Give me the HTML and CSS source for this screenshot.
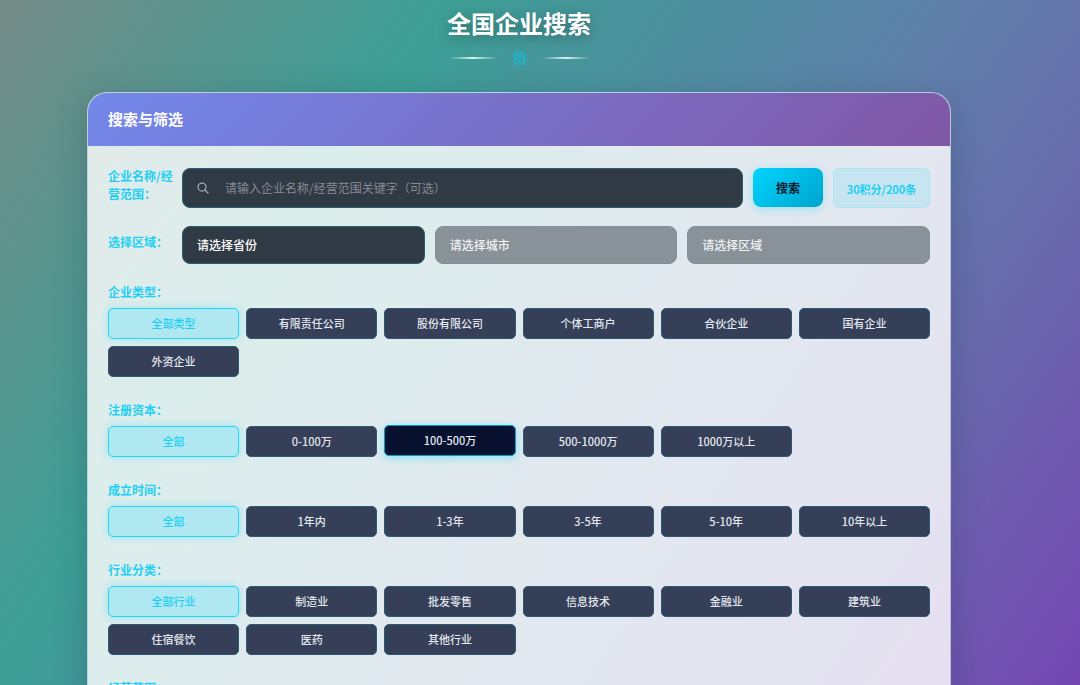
FILE: index.html
```html
<!DOCTYPE html>
<html lang="zh-CN">
<head>
<meta charset="utf-8">
<meta name="viewport" content="width=device-width, initial-scale=1">
<title>全国企业搜索</title>
<link rel="stylesheet" href="styles.css">
</head>
<body>
<main class="page">
  <header class="page-header">
    <h1 class="page-title">全国企业搜索</h1>
    <div class="divider">
      <span class="divider-line"></span>
      <svg class="divider-icon" viewBox="0 0 24 24" fill="none" stroke="currentColor" stroke-width="2" stroke-linejoin="round" stroke-linecap="round" aria-hidden="true"><path d="M4.500 2h15L22 8v2.500c-1 2-4 2-5 0c-1 2-4 2-5 0c-1 2-4 2-5 0c-1 2-4 2-5 0V8zM2.500 7.500h19M3 12.500V20c0 1.200.8 2 2 2h14c1.200 0 2-.8 2-2v-7.500M8 17.500h8"/></svg>
      <span class="divider-line"></span>
    </div>
  </header>

  <section class="card">
    <h2 class="card-header">搜索与筛选</h2>
    <form class="card-body">
      <div class="field-row search-row">
        <label class="label" for="keyword">企业名称/经营范围：</label>
        <div class="search-controls">
          <div class="search-box">
            <svg class="search-icon" viewBox="0 0 24 24" fill="none" stroke="currentColor" stroke-width="2.500" stroke-linecap="round" aria-hidden="true"><circle cx="10" cy="10" r="8"/><path d="M16 16l6 6"/></svg>
            <input class="search-input" id="keyword" type="text" placeholder="请输入企业名称/经营范围关键字（可选）">
          </div>
          <button class="search-button" type="button">搜索</button>
          <span class="cost">30积分/200条</span>
        </div>
      </div>

      <div class="field-row region-row">
        <label class="label" for="province">选择区域：</label>
        <div class="region-controls">
          <select class="select" id="province" aria-label="省份"><option>请选择省份</option></select>
          <select class="select" aria-label="城市" disabled><option>请选择城市</option></select>
          <select class="select" aria-label="区域" disabled><option>请选择区域</option></select>
        </div>
      </div>

      <section class="filter">
        <h3 class="label">企业类型：</h3>
        <div class="options">
          <button class="option option-active" type="button">全部类型</button>
          <button class="option" type="button">有限责任公司</button>
          <button class="option" type="button">股份有限公司</button>
          <button class="option" type="button">个体工商户</button>
          <button class="option" type="button">合伙企业</button>
          <button class="option" type="button">国有企业</button>
          <button class="option" type="button">外资企业</button>
        </div>
      </section>

      <section class="filter">
        <h3 class="label">注册资本：</h3>
        <div class="options">
          <button class="option option-active" type="button">全部</button>
          <button class="option" type="button">0-100万</button>
          <button class="option option-hover" type="button">100-500万</button>
          <button class="option" type="button">500-1000万</button>
          <button class="option" type="button">1000万以上</button>
        </div>
      </section>

      <section class="filter">
        <h3 class="label">成立时间：</h3>
        <div class="options">
          <button class="option option-active" type="button">全部</button>
          <button class="option" type="button">1年内</button>
          <button class="option" type="button">1-3年</button>
          <button class="option" type="button">3-5年</button>
          <button class="option" type="button">5-10年</button>
          <button class="option" type="button">10年以上</button>
        </div>
      </section>

      <section class="filter">
        <h3 class="label">行业分类：</h3>
        <div class="options">
          <button class="option option-active" type="button">全部行业</button>
          <button class="option" type="button">制造业</button>
          <button class="option" type="button">批发零售</button>
          <button class="option" type="button">信息技术</button>
          <button class="option" type="button">金融业</button>
          <button class="option" type="button">建筑业</button>
          <button class="option" type="button">住宿餐饮</button>
          <button class="option" type="button">医药</button>
          <button class="option" type="button">其他行业</button>
        </div>
      </section>

      <section class="filter">
        <h3 class="label">经营范围：</h3>
      </section>
    </form>
  </section>
</main>
</body>
</html>
```
FILE: styles.css
```css
* {
  box-sizing: border-box;
}

html {
  height: 100%;
  overflow: hidden;
}

body {
  height: 100%;
  margin: 0;
  overflow: hidden;
  font-family: "Noto Sans CJK SC", sans-serif;
  background: linear-gradient(124deg, #758a86 0%, #3c9f95 29%, #5f80a9 62%, #6b64ad 82%, #7347b2 100%);
}

button,
input,
select {
  font-family: inherit;
}

.page {
  display: flex;
  flex-direction: column;
  align-items: center;
  gap: 25px;
  padding: 5px 42px 0 0;
}

.page-header {
  display: flex;
  flex-direction: column;
  align-items: center;
  gap: 8px;
}

.page-title {
  margin: 0;
  font-size: 24px;
  line-height: 36px;
  font-weight: 700;
  color: #fff;
  text-shadow: 0 3px 14px rgba(0, 0, 0, 0.3);
}

.divider {
  display: flex;
  align-items: center;
  gap: 16px;
  height: 18px;
}

.divider-line {
  width: 48px;
  height: 2px;
  background: linear-gradient(90deg, transparent, #d5f5f3, transparent);
}

.divider-icon {
  width: 13px;
  height: 13px;
  color: #12bfe0;
}

.card {
  width: 84%;
  max-width: 864px;
  overflow: hidden;
  border: 1px solid rgba(255, 255, 255, 0.6);
  border-radius: 20px 20px 0 0;
  background: linear-gradient(rgba(255, 255, 255, 0.82), rgba(255, 255, 255, 0.82));
  background-clip: padding-box;
  box-shadow: 0 8px 32px rgba(20, 40, 80, 0.25);
}

.card-header {
  margin: 0;
  padding: 14px 20px 15px;
  font-size: 15px;
  line-height: 24px;
  font-weight: 700;
  color: #fff;
  background: linear-gradient(135deg, #7288ea, #8057a5);
}

.card-body {
  padding: 22px 20px 20px;
}

.field-row {
  display: flex;
  gap: 8px;
}

.search-row {
  margin-bottom: 18px;
}

.search-row .label {
  margin-top: -1px;
}

.region-row {
  margin-bottom: 19px;
}

.region-row .label {
  padding-top: 7px;
}

.label {
  margin: 0;
  font-size: 12px;
  line-height: 18px;
  font-weight: 700;
  color: #22cff4;
}

.field-row .label {
  flex: 0 0 66px;
}

.search-controls {
  display: flex;
  flex: 1;
  gap: 10px;
}

.search-box {
  display: flex;
  flex: 1;
  align-items: center;
  gap: 16px;
  height: 40px;
  padding: 0 14px;
  border: 1px solid #2b6070;
  border-radius: 8px;
  background: #303a45;
}

.search-icon {
  width: 12px;
  height: 12px;
  color: #a2a9b0;
}

.search-input {
  flex: 1;
  min-width: 0;
  padding: 0 0 2px;
  border: 0;
  outline: 0;
  font-size: 12px;
  color: #fff;
  background: transparent;
}

.search-input::placeholder {
  color: #858b92;
  opacity: 1;
}

.search-button {
  width: 70px;
  height: 39px;
  border: 0;
  border-radius: 8px;
  font-size: 12px;
  font-weight: 700;
  color: #061a2c;
  background: linear-gradient(135deg, #00d4ff, #00a4cc);
  box-shadow: 0 2px 10px rgba(0, 212, 255, 0.3);
}

.cost {
  display: flex;
  align-items: center;
  justify-content: center;
  width: 97px;
  height: 40px;
  padding-top: 2px;
  border: 1px solid #a9e7f2;
  border-radius: 6px;
  font-size: 11px;
  font-weight: 700;
  color: #22cff4;
  background: rgba(0, 212, 255, 0.12);
}

.region-controls {
  display: grid;
  flex: 1;
  grid-template-columns: repeat(3, 1fr);
  gap: 10px;
}

.select {
  min-width: 0;
  height: 38px;
  padding: 0 14px 2px;
  border: 1px solid #2b6070;
  border-radius: 8px;
  appearance: none;
  font-size: 12px;
  font-weight: 500;
  color: #fff;
  background: #303a45;
  opacity: 1;
}

.select:disabled {
  border-color: #7f9199;
  color: #f0f2f5;
  background: #8a9299;
}

.filter {
  display: flex;
  flex-direction: column;
  gap: 7px;
  margin-bottom: 24px;
}

.options {
  display: grid;
  grid-template-columns: repeat(6, 1fr);
  gap: 7px;
}

.option {
  height: 31px;
  padding: 0 6px 1px;
  border: 1px solid #2e5b73;
  border-radius: 5px;
  font-size: 11px;
  font-weight: 500;
  color: #e3e7ed;
  background: #353f58;
}

.option-active {
  border-color: #22d4f5;
  color: #22cff4;
  background: #b0e8f2;
  box-shadow: 0 0 10px rgba(0, 212, 255, 0.3);
}

.option-hover {
  border-color: #079bbd;
  background: #081230;
  box-shadow: 0 2px 8px rgba(0, 212, 255, 0.4);
  transform: translateY(-1px);
}
```
